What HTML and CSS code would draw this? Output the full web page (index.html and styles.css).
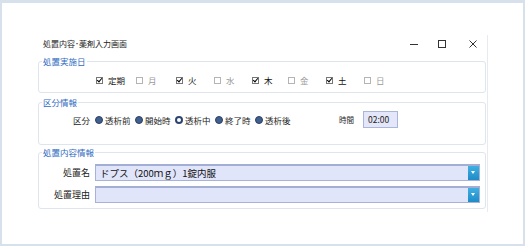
FILE: index.html
```html
<!DOCTYPE html>
<html lang="ja">
<head>
    <meta charset="UTF-8">
    <title>処置内容･薬剤入力画面</title>
    <link rel="stylesheet" href="styles.css">
</head>
<body>

<div class="screen">
    <div class="window">

        <div class="titlebar">
            <span class="title">処置内容･薬剤入力画面</span>
            <div class="controls">
                <span class="ctl">
                    <svg width="10" height="10" viewBox="0 0 10 10"><path d="M1 5.5H9" stroke="#333" stroke-width="1"/></svg>
                </span>
                <span class="ctl">
                    <svg width="10" height="10" viewBox="0 0 10 10"><rect x="1.5" y="1.5" width="7" height="7" fill="none" stroke="#333" stroke-width="1"/></svg>
                </span>
                <span class="ctl">
                    <svg width="10" height="10" viewBox="0 0 10 10"><path d="M1.5 1.5L8.5 8.5M8.5 1.5L1.5 8.5" stroke="#333" stroke-width="1"/></svg>
                </span>
            </div>
        </div>

        <!-- 処置実施日 -->
        <fieldset class="group group-days">
            <legend>処置実施日</legend>
            <div class="days">
                <span class="day wide checked"><i class="box"></i>定期</span>
                <span class="day wide"><i class="box"></i>月</span>
                <span class="day checked"><i class="box"></i>火</span>
                <span class="day"><i class="box"></i>水</span>
                <span class="day narrow checked"><i class="box"></i>木</span>
                <span class="day"><i class="box"></i>金</span>
                <span class="day checked"><i class="box"></i>土</span>
                <span class="day"><i class="box"></i>日</span>
            </div>
        </fieldset>

        <!-- 区分情報 -->
        <fieldset class="group group-kind">
            <legend>区分情報</legend>
            <div class="row">
                <span class="row-label">区分</span>
                <span class="radio"><i class="dot"></i>透析前</span>
                <span class="radio"><i class="dot"></i>開始時</span>
                <span class="radio selected"><i class="dot"></i>透析中</span>
                <span class="radio"><i class="dot"></i>終了時</span>
                <span class="radio"><i class="dot"></i>透析後</span>
                <span class="time-label">時間</span>
                <span class="time-box">02:00</span>
            </div>
        </fieldset>

        <!-- 処置内容情報 -->
        <fieldset class="group group-content">
            <legend>処置内容情報</legend>
            <div class="row">
                <span class="row-label">処置名</span>
                <div class="combo">
                    <span class="combo-text">ドプス（200ｍｇ）1錠内服</span>
                    <span class="combo-btn"></span>
                </div>
            </div>
            <div class="row">
                <span class="row-label">処置理由</span>
                <div class="combo">
                    <span class="combo-text"></span>
                    <span class="combo-btn"></span>
                </div>
            </div>
        </fieldset>

    </div>
</div>

</body>
</html>
```

FILE: styles.css
```css
body {
    margin: 0;
    padding: 0;
    background-color: #fff;
    font-family: "Noto Sans CJK JP", "Noto Sans", sans-serif;
    color: #222;
}

.screen {
    width: 525px;
    height: 246px;
    box-sizing: border-box;
    border: 2px solid #d6e1eb;
    border-top-width: 3px;
    background-color: #fff;
}

.window {
    margin: 32px 0 0 36px;
    width: 449px;
    height: 177px;
    border-right: 1px solid #e6ebf0;
}

.titlebar {
    display: flex;
    align-items: center;
    justify-content: space-between;
    height: 18px;
    margin-right: 1px;
}

.title {
    padding-left: 5px;
    font-size: 8px;
    line-height: 18px;
    color: #222;
}

.controls {
    display: flex;
    align-items: center;
}

.ctl {
    display: flex;
    align-items: center;
    justify-content: center;
    width: 26px;
    height: 18px;
}

.ctl + .ctl {
    margin-left: 2px;
}

.ctl:last-child {
    margin-left: 5px;
}

.group {
    margin: 2px 1px 0 0;
    padding: 0 5px 5px 0;
    border: 1px solid #dfe5ec;
    border-radius: 3px;
    min-width: 0;
}

.group legend {
    margin-left: 3px;
    padding: 0 1px;
    font-size: 8.5px;
    line-height: 12px;
    color: #2f6bbf;
}

.group-kind {
    margin-top: 3px;
    padding-bottom: 16px;
}

.group-content {
    margin-top: 1px;
}

/* checkbox row */
.days {
    display: flex;
    align-items: center;
    height: 14px;
    margin-top: 6px;
    padding-left: 57px;
}

.day {
    display: flex;
    align-items: center;
    width: 38px;
    font-size: 8.5px;
    color: #9a9a9a;
}

.day.wide {
    width: 40px;
}

.day.narrow {
    width: 36px;
}

.day.checked {
    color: #111;
}

.box {
    position: relative;
    display: inline-block;
    width: 5px;
    height: 5px;
    margin-right: 5px;
    border: 1px solid #b4b4b4;
    background-color: #fff;
}

.day.checked .box {
    border-color: #777;
}

.day.checked .box::after {
    content: "";
    position: absolute;
    left: 1px;
    top: -1px;
    width: 2px;
    height: 4px;
    border-right: 1.3px solid #000;
    border-bottom: 1.3px solid #000;
    transform: rotate(40deg);
}

/* generic rows */
.row {
    display: flex;
    align-items: center;
    height: 17px;
}

.group-kind .row {
    margin-top: 3px;
}

.group-content .row {
    margin-top: 6px;
}

.group-content .row + .row {
    margin-top: 5px;
}

.row-label {
    width: 51px;
    margin-right: 5px;
    text-align: right;
    font-size: 8.5px;
    color: #222;
}

.group-content .row-label {
    font-size: 9px;
}

.radio {
    display: flex;
    align-items: center;
    width: 40px;
    font-size: 8.5px;
    color: #222;
}

.dot {
    display: inline-block;
    width: 6px;
    height: 6px;
    margin-right: 2px;
    border: 1px solid #2b3f62;
    border-radius: 50%;
    background-color: #41608f;
}

.radio.selected .dot {
    width: 4px;
    height: 4px;
    border: 2px solid #2e4470;
    background-color: #fff;
}

.time-label {
    margin-left: 44px;
    font-size: 7.5px;
    color: #222;
}

.time-box {
    box-sizing: border-box;
    width: 35px;
    height: 17px;
    margin-left: 9px;
    padding-left: 4px;
    border: 1px solid #a9b6da;
    background-color: #e3e7f9;
    font-size: 8.5px;
    line-height: 15px;
    color: #222;
}

.combo {
    display: flex;
    flex: 1;
    box-sizing: border-box;
    height: 17px;
    border: 1px solid #a7b2d8;
    border-top: 2px solid #a3aed4;
    background-color: #e1e5f9;
}

.combo-text {
    flex: 1;
    padding-left: 4px;
    font-size: 9.5px;
    line-height: 14px;
    color: #111;
}

.combo-btn {
    position: relative;
    width: 11px;
    background: linear-gradient(#3fb0e2, #1f8bc8);
}

.combo-btn::after {
    content: "";
    position: absolute;
    left: 3px;
    top: 5px;
    border-left: 2.5px solid transparent;
    border-right: 2.5px solid transparent;
    border-top: 3px solid #fff;
}
```
